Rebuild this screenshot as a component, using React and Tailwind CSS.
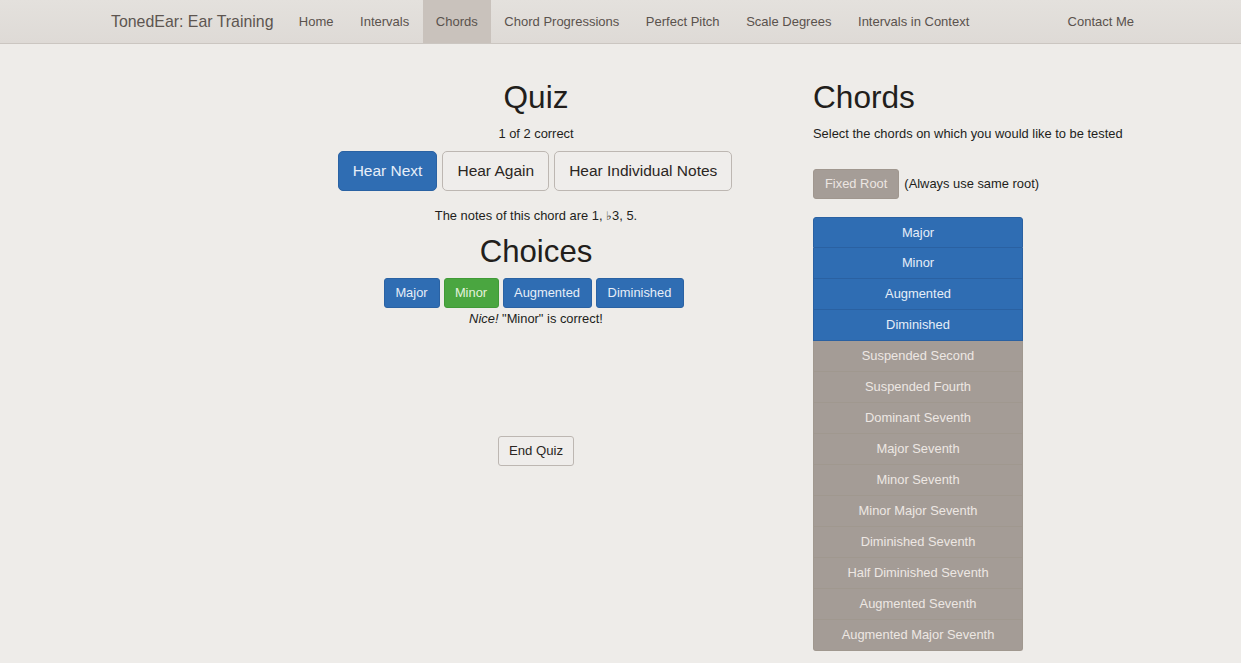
import React from "react";

const navItems = [
  { label: "Home", active: false },
  { label: "Intervals", active: false },
  { label: "Chords", active: true },
  { label: "Chord Progressions", active: false },
  { label: "Perfect Pitch", active: false },
  { label: "Scale Degrees", active: false },
  { label: "Intervals in Context", active: false },
];

const chords = [
  { label: "Major", on: true },
  { label: "Minor", on: true },
  { label: "Augmented", on: true },
  { label: "Diminished", on: true },
  { label: "Suspended Second", on: false },
  { label: "Suspended Fourth", on: false },
  { label: "Dominant Seventh", on: false },
  { label: "Major Seventh", on: false },
  { label: "Minor Seventh", on: false },
  { label: "Minor Major Seventh", on: false },
  { label: "Diminished Seventh", on: false },
  { label: "Half Diminished Seventh", on: false },
  { label: "Augmented Seventh", on: false },
  { label: "Augmented Major Seventh", on: false },
];

export default function App() {
  return (
    <div
      className="min-h-[663px] bg-[#eeece9] text-[#221e1b]"
      style={{ fontFamily: '"Liberation Sans", Arial, sans-serif' }}
    >
      {/* Navbar */}
      <div className="h-[44px] border-b border-[#cbc6c1] bg-gradient-to-b from-[#e4e1dd] to-[#dedad6] flex items-stretch">
        <div className="ml-[111px] flex items-center text-[15.9px] text-[#5d5550] pr-[12px]">
          TonedEar: Ear Training
        </div>
        <div className="flex items-stretch">
          {navItems.map((it) => (
            <div
              key={it.label}
              className={
                "flex items-center px-[13.3px] text-[13px] text-[#5a524d] " +
                (it.active ? "bg-[#c9c2bc] text-[#4b4440]" : "")
              }
            >
              {it.label}
            </div>
          ))}
        </div>
        <div className="ml-[85px] flex items-center text-[13px] text-[#5a524d]">
          Contact Me
        </div>
      </div>

      {/* Main */}
      <div className="flex">
        {/* Left column */}
        <div className="ml-[300px] w-[472px] flex flex-col items-center text-[12.9px]">
          <h1 className="mt-[35px] h-[36px] leading-[36px] text-[31.6px]">Quiz</h1>
          <div className="mt-[10px] h-[18px] leading-[18px]">1 of 2 correct</div>
          <div className="mt-[8px] mr-[2px] flex gap-[5px]">
            <button className="h-[40px] px-[14px] rounded-[5px] bg-[#2f6db3] border border-[#2a62a3] text-[#e6eef8] text-[15.5px]">
              Hear Next
            </button>
            <button className="h-[40px] px-[14px] rounded-[5px] bg-[#efedeb] border border-[#bdb7b2] text-[#2b2623] text-[15.5px]">
              Hear Again
            </button>
            <button className="h-[40px] px-[14px] rounded-[5px] bg-[#efedeb] border border-[#bdb7b2] text-[#2b2623] text-[15.5px]">
              Hear Individual Notes
            </button>
          </div>
          <div className="mt-[16px] h-[18px] leading-[18px]">
            The notes of this chord are 1, <span className="text-[12px]">♭</span>3, 5.
          </div>
          <h1 className="mt-[9px] h-[36px] leading-[36px] text-[31.2px]">Choices</h1>
          <div className="mt-[8px] mr-[5px] flex gap-[4px]">
            <button className="h-[30px] w-[56px] rounded-[3px] bg-[#2f6db3] border border-[#2a62a3] text-[#e6eef8] text-[12.9px]">
              Major
            </button>
            <button className="h-[30px] w-[55px] rounded-[3px] bg-[#4aa640] border border-[#409a37] text-[#e4f3de] text-[12.9px]">
              Minor
            </button>
            <button className="h-[30px] w-[89px] rounded-[3px] bg-[#2f6db3] border border-[#2a62a3] text-[#e6eef8] text-[12.9px]">
              Augmented
            </button>
            <button className="h-[30px] w-[88px] rounded-[3px] bg-[#2f6db3] border border-[#2a62a3] text-[#e6eef8] text-[12.9px]">
              Diminished
            </button>
          </div>
          <div className="mt-[2px] h-[18px] leading-[18px]">
            <i>Nice!</i> "Minor" is correct!
          </div>
          <button className="mt-[108px] h-[30px] w-[76px] rounded-[3px] bg-[#efedeb] border border-[#bdb7b2] text-[#2b2623] text-[13.2px]">
            End Quiz
          </button>
        </div>

        {/* Right column */}
        <div className="ml-[41px] flex flex-col items-start text-[12.9px]">
          <h1 className="mt-[35px] h-[36px] leading-[36px] text-[31.6px]">Chords</h1>
          <div className="mt-[10px] h-[18px] leading-[18px]">
            Select the chords on which you would like to be tested
          </div>
          <div className="mt-[26px] flex items-center gap-[5px]">
            <button className="h-[30px] px-[11px] rounded-[3px] bg-[#a59d97] border border-[#a0978f] text-[#ece6e2] text-[12.9px]">
              Fixed Root
            </button>
            <span>(Always use same root)</span>
          </div>
          <div className="mt-[18px] w-[210px] flex flex-col">
            {chords.map((c, i) => {
              const first = i === 0;
              const last = i === chords.length - 1;
              return (
                <div
                  key={c.label}
                  className={
                    "h-[31px] flex items-center justify-center border-x " +
                    (c.on
                      ? "bg-[#2f6db3] border-[#2a61a2] text-[#e6eef8] "
                      : "bg-[#a49c96] border-[#a0988f] text-[#ede7e3] ") +
                    (last ? "" : "border-b ") +
                    (first ? "rounded-t-[3px] border-t " : "") +
                    (last ? "rounded-b-[3px] border-b " : "")
                  }
                >
                  {c.label}
                </div>
              );
            })}
          </div>
        </div>
      </div>
    </div>
  );
}
